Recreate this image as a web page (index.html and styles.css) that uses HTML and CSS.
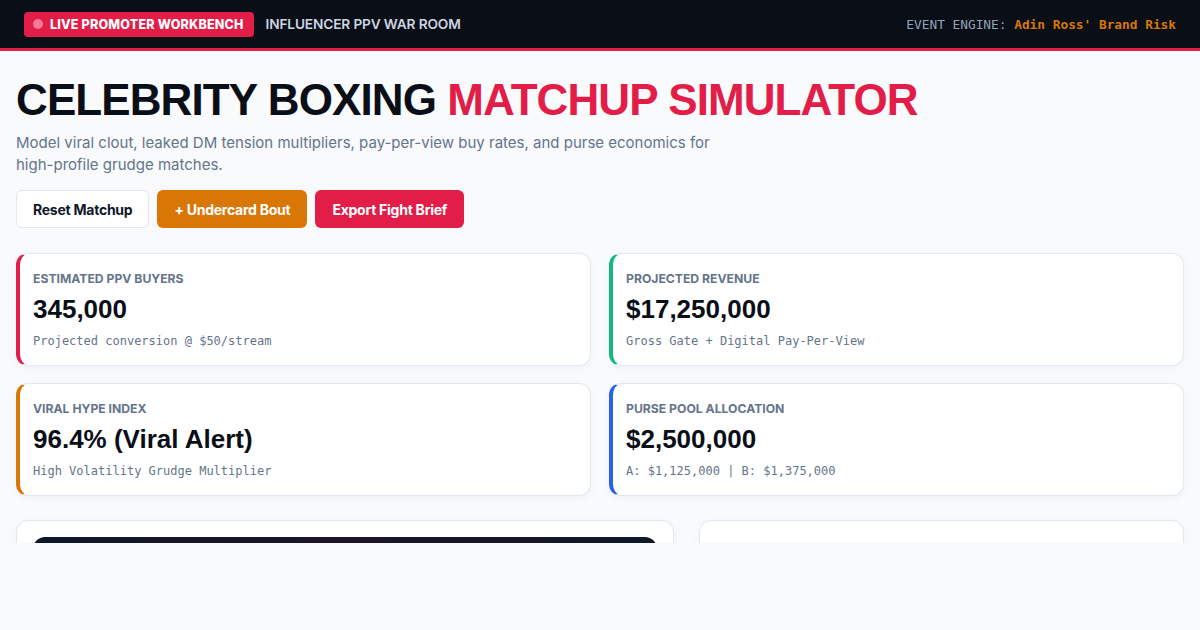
FILE: index.html
```html
<!DOCTYPE html>
<html lang="en">
<head>
<meta charset="utf-8">
<title>Celebrity Boxing Matchup Simulator</title>
<link rel="stylesheet" href="styles.css">
</head>
<body>
<div class="page">
  <header class="topbar">
    <div class="topbar-left">
      <span class="live-badge"><span class="live-dot"></span>LIVE PROMOTER WORKBENCH</span>
      <span class="room-title">INFLUENCER PPV WAR ROOM</span>
    </div>
    <div class="engine">EVENT ENGINE: <span class="engine-risk">Adin Ross' Brand Risk</span></div>
  </header>

  <main class="main">
    <section class="hero">
      <h1 class="title">CELEBRITY BOXING <span class="accent">MATCHUP SIMULATOR</span></h1>
      <p class="subtitle">Model viral clout, leaked DM tension multipliers, pay-per-view buy rates, and purse economics for high-profile grudge matches.</p>
      <div class="actions">
        <button class="btn btn-light">Reset Matchup</button>
        <button class="btn btn-orange">+ Undercard Bout</button>
        <button class="btn btn-red">Export Fight Brief</button>
      </div>
    </section>

    <section class="stats">
      <div class="stat stat-red">
        <div class="stat-label">Estimated PPV Buyers</div>
        <div class="stat-value">345,000</div>
        <div class="stat-sub">Projected conversion @ $50/stream</div>
      </div>
      <div class="stat stat-green">
        <div class="stat-label">Projected Revenue</div>
        <div class="stat-value">$17,250,000</div>
        <div class="stat-sub">Gross Gate + Digital Pay-Per-View</div>
      </div>
      <div class="stat stat-orange">
        <div class="stat-label">Viral Hype Index</div>
        <div class="stat-value">96.4% (Viral Alert)</div>
        <div class="stat-sub">High Volatility Grudge Multiplier</div>
      </div>
      <div class="stat stat-blue">
        <div class="stat-label">Purse Pool Allocation</div>
        <div class="stat-value">$2,500,000</div>
        <div class="stat-sub">A: $1,125,000 | B: $1,375,000</div>
      </div>
    </section>

    <section class="lower">
      <div class="panel">
        <div class="arena"></div>
      </div>
      <div class="panel"></div>
    </section>
  </main>
</div>
</body>
</html>
```

FILE: styles.css
```css
* { box-sizing: border-box; }

html, body {
  margin: 0;
  padding: 0;
  background: #f8fafc;
}

body {
  font-family: Inter, "Noto Sans", "Liberation Sans", sans-serif;
  color: #0f172a;
}

.page {
  height: 543px;
  overflow: hidden;
}

.topbar {
  height: 51px;
  background: #0a0e17;
  border-bottom: 3px solid #e11d48;
  display: flex;
  align-items: center;
  justify-content: space-between;
  padding: 0 24px;
}

.topbar-left {
  display: flex;
  align-items: center;
  gap: 12px;
}

.live-badge {
  display: inline-flex;
  align-items: center;
  gap: 7px;
  height: 25px;
  padding: 0 10px 0 9px;
  background: #e11d48;
  border-radius: 4px;
  color: #fff;
  font-size: 12.5px;
  font-weight: 800;
  letter-spacing: 0.2px;
}

.live-dot {
  width: 10px;
  height: 10px;
  border-radius: 50%;
  background: #f17a96;
}

.room-title {
  color: #cbd5e1;
  font-size: 13.7px;
  font-weight: 600;
  letter-spacing: -0.15px;
}

.engine {
  font-family: "DejaVu Sans Mono", "Liberation Mono", monospace;
  font-size: 12.8px;
  color: #94a3b8;
}

.engine-risk {
  color: #d97706;
  font-weight: 700;
}

.main {
  padding: 25px 16px 0;
}

.title {
  margin: 0;
  font-family: "Liberation Sans", Arial, sans-serif;
  font-size: 44px;
  line-height: 48px;
  font-weight: 700;
  letter-spacing: -0.9px;
  color: #0a0e17;
}

.accent { color: #e11d48; }

.subtitle {
  margin: 8px 0 0;
  max-width: 720px;
  font-size: 15px;
  line-height: 22px;
  color: #64748b;
}

.actions {
  display: flex;
  gap: 8px;
  margin-top: 14px;
}

.btn {
  height: 38px;
  padding: 0 16px;
  border-radius: 6px;
  border: 1px solid transparent;
  font-family: inherit;
  font-size: 14px;
  font-weight: 700;
  letter-spacing: -0.25px;
  cursor: pointer;
}

.btn-light {
  background: #fff;
  border-color: #e2e8f0;
  color: #0f172a;
}

.btn-orange {
  background: #d97706;
  color: #fff;
}

.btn-red {
  background: #e11d48;
  color: #fff;
}

.stats {
  margin-top: 25px;
  display: grid;
  grid-template-columns: 1fr 1fr;
  gap: 17px 18px;
}

.stat {
  height: 113px;
  background: #fff;
  border: 1px solid #e2e8f0;
  border-left: 4px solid #e11d48;
  border-radius: 12px;
  padding: 17px 16px 14px 13px;
  box-shadow: 0 2px 8px rgba(15, 23, 42, 0.04);
}

.stat-red { border-left-color: #e11d48; }
.stat-green { border-left-color: #10b981; }
.stat-orange { border-left-color: #d97706; }
.stat-blue { border-left-color: #2563eb; }

.stat-label {
  font-size: 12.2px;
  line-height: 16px;
  font-weight: 700;
  text-transform: uppercase;
  color: #64748b;
  letter-spacing: 0;
}

.stat-value {
  margin-top: 7px;
  font-family: "Liberation Sans", Arial, sans-serif;
  font-size: 26px;
  line-height: 31px;
  font-weight: 700;
  color: #0a0e17;
}

.stat-sub {
  margin-top: 8px;
  font-family: "DejaVu Sans Mono", "Liberation Mono", monospace;
  font-size: 12px;
  line-height: 16px;
  color: #64748b;
}

.lower {
  margin-top: 24px;
  display: grid;
  grid-template-columns: 657fr 485fr;
  gap: 25px;
}

.panel {
  height: 300px;
  background: #fff;
  border: 1px solid #e2e8f0;
  border-radius: 12px;
  padding: 16px;
  box-shadow: 0 2px 8px rgba(15, 23, 42, 0.04);
}

.arena {
  height: 220px;
  border-radius: 12px;
  background: linear-gradient(90deg, #0f172a 0%, #1c1527 50%, #0f172a 100%);
}
```
